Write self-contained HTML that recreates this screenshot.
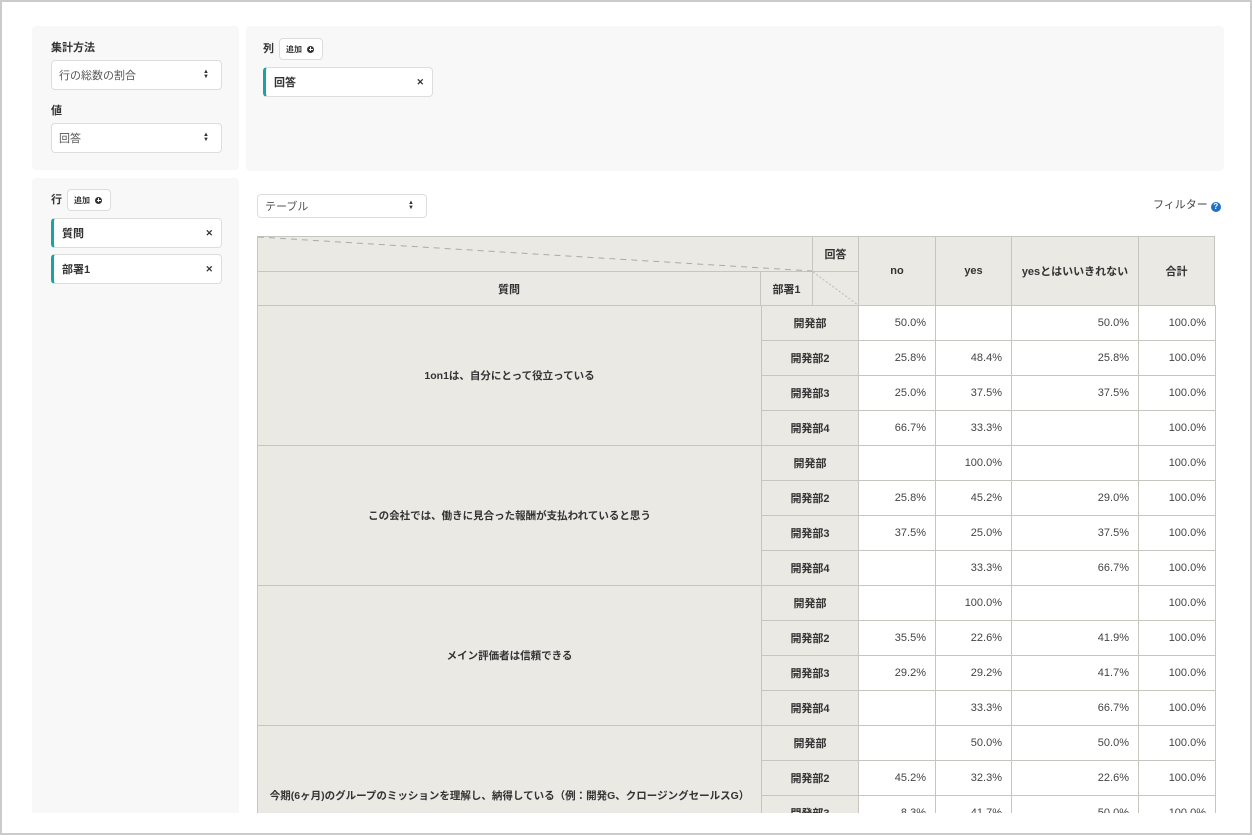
<!DOCTYPE html>
<html><head><meta charset="utf-8"><style>
*{box-sizing:border-box;margin:0;padding:0}
body{width:1252px;height:835px;overflow:hidden;background:#fff;font-family:"Liberation Sans","Noto Sans CJK JP",sans-serif;color:#333;position:relative}
.frame{position:absolute;left:0;top:0;width:1252px;height:835px;border:2px solid #cbcbcb;pointer-events:none;z-index:10}
.clip{position:absolute;left:0;top:0;width:1252px;height:813px;overflow:hidden}
.panel{position:absolute;background:#f8f8f8;border-radius:4px}
.lbl{position:absolute;font-size:11px;font-weight:bold;color:#333;line-height:12px}
.sel{position:absolute;background:#fff;border:1px solid #ddd;border-radius:4px;font-size:11px;color:#555;padding-left:7px;display:flex;align-items:center}
.sel .ar{position:absolute;right:12px;top:50%;transform:translateY(-50%);font-size:6px;line-height:5px;color:#333;text-align:center}
.btn{position:absolute;background:#fff;border:1px solid #ddd;border-radius:4px;font-size:8px;font-weight:bold;display:flex;align-items:center;padding-left:6px;color:#333}
.btn i{display:inline-block;width:7px;height:7px;border-radius:50%;background:#333;margin-left:5px;position:relative}
.btn i:before{content:"";position:absolute;left:1.5px;top:3px;width:4px;height:1px;background:#fff}
.btn i:after{content:"";position:absolute;left:3px;top:1.5px;width:1px;height:4px;background:#fff}
.chip{position:absolute;background:#fff;border:1px solid #ddd;border-left:3px solid #1aa3a3;border-radius:4px;font-size:11px;font-weight:bold;display:flex;align-items:center;padding-left:8px;color:#333}
.chip span{position:absolute;right:8px;font-size:9px}
.hd{position:absolute;background:#ebe9e4;border:1px solid #c7c5bf;font-size:11px;font-weight:bold;display:flex;align-items:center;justify-content:center;color:#333}
table{position:absolute;left:257px;top:305px;border-collapse:collapse;table-layout:fixed;font-size:11px}
td{border:1px solid #c7c5bf;height:35px;padding:0 9px 1px;text-align:right;color:#444}
td.q,td.d{background:#ebe9e4;font-weight:bold;text-align:center;color:#333;white-space:nowrap}
td.q{font-size:10.5px;padding:0}
</style></head><body>
<div class="clip">
<div class="panel" style="left:32px;top:26px;width:207px;height:144px"></div>
<div class="panel" style="left:246px;top:26px;width:978px;height:145px"></div>
<div class="panel" style="left:32px;top:178px;width:207px;height:640px"></div>

<div class="lbl" style="left:51px;top:42px">集計方法</div>
<div class="sel" style="left:51px;top:60px;width:171px;height:30px">行の総数の割合<div class="ar">▲<br>▼</div></div>
<div class="lbl" style="left:51px;top:105px">値</div>
<div class="sel" style="left:51px;top:123px;width:171px;height:30px">回答<div class="ar">▲<br>▼</div></div>

<div class="lbl" style="left:263px;top:43px">列</div>
<div class="btn" style="left:279px;top:38px;width:44px;height:22px">追加<i></i></div>
<div class="chip" style="left:263px;top:67px;width:170px;height:30px">回答<span>✕</span></div>

<div class="lbl" style="left:51px;top:194px">行</div>
<div class="btn" style="left:67px;top:189px;width:44px;height:22px">追加<i></i></div>
<div class="chip" style="left:51px;top:218px;width:171px;height:30px">質問<span>✕</span></div>
<div class="chip" style="left:51px;top:254px;width:171px;height:30px">部署1<span>✕</span></div>

<div class="sel" style="left:257px;top:194px;width:170px;height:24px">テーブル<div class="ar">▲<br>▼</div></div>
<div style="position:absolute;left:1153px;top:199px;font-size:11px;color:#444;line-height:13px">フィルター <span style="display:inline-block;width:10px;height:10px;border-radius:50%;background:#1f6fc5;color:#fff;font-size:8px;font-weight:bold;text-align:center;line-height:10px;vertical-align:-1px">?</span></div>

<div class="hd" style="left:257px;top:236px;width:556px;height:36px"></div>
<div class="hd" style="left:812px;top:236px;width:47px;height:36px">回答</div>
<div class="hd" style="left:257px;top:271px;width:504px;height:35px">質問</div>
<div class="hd" style="left:760px;top:271px;width:53px;height:35px">部署1</div>
<div class="hd" style="left:812px;top:271px;width:47px;height:35px"></div>
<div class="hd" style="left:858px;top:236px;width:78px;height:70px">no</div>
<div class="hd" style="left:935px;top:236px;width:77px;height:70px">yes</div>
<div class="hd" style="left:1011px;top:236px;width:128px;height:70px">yesとはいいきれない</div>
<div class="hd" style="left:1138px;top:236px;width:77px;height:70px">合計</div>
<svg style="position:absolute;left:0;top:0" width="1252" height="835"><line x1="258" y1="237" x2="812" y2="271" stroke="#aaa" stroke-width="1" stroke-dasharray="6,5"/><line x1="813" y1="272" x2="858" y2="305" stroke="#bbb" stroke-width="1" stroke-dasharray="2,2"/></svg>

<table>
<colgroup><col style="width:504px"><col style="width:97px"><col style="width:77px"><col style="width:76px"><col style="width:127px"><col style="width:77px"></colgroup>
<tr><td class="q" rowspan="4">1on1は、自分にとって役立っている</td><td class="d">開発部</td><td>50.0%</td><td></td><td>50.0%</td><td>100.0%</td></tr>
<tr><td class="d">開発部2</td><td>25.8%</td><td>48.4%</td><td>25.8%</td><td>100.0%</td></tr>
<tr><td class="d">開発部3</td><td>25.0%</td><td>37.5%</td><td>37.5%</td><td>100.0%</td></tr>
<tr><td class="d">開発部4</td><td>66.7%</td><td>33.3%</td><td></td><td>100.0%</td></tr>
<tr><td class="q" rowspan="4">この会社では、働きに見合った報酬が支払われていると思う</td><td class="d">開発部</td><td></td><td>100.0%</td><td></td><td>100.0%</td></tr>
<tr><td class="d">開発部2</td><td>25.8%</td><td>45.2%</td><td>29.0%</td><td>100.0%</td></tr>
<tr><td class="d">開発部3</td><td>37.5%</td><td>25.0%</td><td>37.5%</td><td>100.0%</td></tr>
<tr><td class="d">開発部4</td><td></td><td>33.3%</td><td>66.7%</td><td>100.0%</td></tr>
<tr><td class="q" rowspan="4">メイン評価者は信頼できる</td><td class="d">開発部</td><td></td><td>100.0%</td><td></td><td>100.0%</td></tr>
<tr><td class="d">開発部2</td><td>35.5%</td><td>22.6%</td><td>41.9%</td><td>100.0%</td></tr>
<tr><td class="d">開発部3</td><td>29.2%</td><td>29.2%</td><td>41.7%</td><td>100.0%</td></tr>
<tr><td class="d">開発部4</td><td></td><td>33.3%</td><td>66.7%</td><td>100.0%</td></tr>
<tr><td class="q" rowspan="4">今期(6ヶ月)のグループのミッションを理解し、納得している（例：開発G、クロージングセールスG）</td><td class="d">開発部</td><td></td><td>50.0%</td><td>50.0%</td><td>100.0%</td></tr>
<tr><td class="d">開発部2</td><td>45.2%</td><td>32.3%</td><td>22.6%</td><td>100.0%</td></tr>
<tr><td class="d">開発部3</td><td>8.3%</td><td>41.7%</td><td>50.0%</td><td>100.0%</td></tr>
<tr><td class="d">開発部4</td><td></td><td>50.0%</td><td>27.3%</td><td>100.0%</td></tr>
</table>
</div>
<div class="frame"></div>
</body></html>
